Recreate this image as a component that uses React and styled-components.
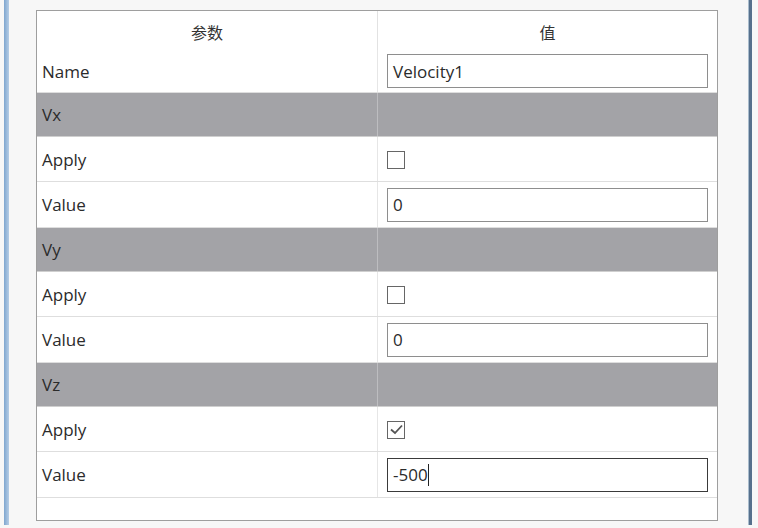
import React from "react";
import styled, { createGlobalStyle } from "styled-components";

const GlobalStyle = createGlobalStyle`
  html, body {
    margin: 0;
    padding: 0;
    background: #f7f7f7;
  }
`;

const rows = [
  { type: "text", label: "Name", value: "Velocity1", height: 43 },
  { type: "group", label: "Vx" },
  { type: "check", label: "Apply", checked: false },
  { type: "text", label: "Value", value: "0" },
  { type: "group", label: "Vy" },
  { type: "check", label: "Apply", checked: false },
  { type: "text", label: "Value", value: "0" },
  { type: "group", label: "Vz" },
  { type: "check", label: "Apply", checked: true },
  { type: "text", label: "Value", value: "-500", focused: true },
];

const rowHeights = { group: 44, check: 45, text: 46 };

const App = () => {
  return (
    <Page>
      <GlobalStyle />
      <LeftBar />
      <Panel>
        <HeaderRow>
          <HeaderCell>参数</HeaderCell>
          <HeaderCell>值</HeaderCell>
        </HeaderRow>
        {rows.map((row, i) => (
          <Row
            key={i}
            $group={row.type === "group"}
            $height={row.height || rowHeights[row.type]}
          >
            <LabelCell>{row.label}</LabelCell>
            <ValueCell $group={row.type === "group"}>
              {row.type === "text" && (
                <Field $focused={row.focused}>
                  {row.value}
                  {row.focused && <Caret />}
                </Field>
              )}
              {row.type === "check" && (
                <CheckBox>
                  {row.checked && (
                    <svg width="15" height="15" viewBox="0 0 15 15">
                      <path
                        d="M2 7.5 L6 11 L13 3.5"
                        fill="none"
                        stroke="#555"
                        strokeWidth="1.8"
                      />
                    </svg>
                  )}
                </CheckBox>
              )}
            </ValueCell>
          </Row>
        ))}
        <Filler />
      </Panel>
      <RightBar />
    </Page>
  );
};

const Page = styled.div`
  width: 758px;
  height: 528px;
  display: flex;
  align-items: stretch;
  background: #f7f7f7;
  font-family: "Open Sans", "Noto Sans CJK SC", sans-serif;
  color: #2b2b2b;
`;

const LeftBar = styled.div`
  width: 5px;
  margin: 0 0 3px 4px;
  background: linear-gradient(to right, #7fa6cf, #b5cde6);
`;

const RightBar = styled.div`
  width: 3px;
  margin: 0 0 3px 31px;
  background: #56708c;
  box-shadow: -1px 0 0 #a9bccd;
`;

const Panel = styled.div`
  width: 680px;
  margin: 10px 0 7px 27px;
  border: 1px solid #9e9e9e;
  background: #fff;
  display: flex;
  flex-direction: column;
`;

const HeaderRow = styled.div`
  display: grid;
  grid-template-columns: 1fr 1fr;
  height: 39px;
`;

const HeaderCell = styled.div`
  display: flex;
  align-items: center;
  justify-content: center;
  padding-top: 2px;
  font-family: "Noto Sans CJK SC", sans-serif;
  font-size: 16px;
  color: #333;
  & + & {
    border-left: 1px solid #e2e2e2;
  }
`;

const Row = styled.div`
  display: grid;
  grid-template-columns: 1fr 1fr;
  height: ${(p) => p.$height}px;
  box-sizing: border-box;
  border-bottom: 1px solid #dedede;
  background: ${(p) => (p.$group ? "#a3a3a7" : "#fff")};
  border-bottom-color: ${(p) => (p.$group ? "#cfcfcf" : "#dedede")};
`;

const LabelCell = styled.div`
  display: flex;
  align-items: center;
  padding-left: 5px;
  font-size: 17px;
`;

const ValueCell = styled.div`
  display: flex;
  align-items: center;
  padding: 0 9px;
  border-left: 1px solid ${(p) => (p.$group ? "#bdbdc0" : "#e6e6e6")};
`;

const Field = styled.div`
  flex: 1;
  height: 34px;
  box-sizing: border-box;
  border: ${(p) => (p.$focused ? "1.5px solid #3a3a3a" : "1px solid #8e8e8e")};
  display: flex;
  align-items: center;
  padding-left: 5px;
  font-size: 17px;
`;

const Caret = styled.span`
  display: inline-block;
  width: 1.5px;
  height: 22px;
  background: #222;
`;

const CheckBox = styled.div`
  width: 18px;
  height: 18px;
  box-sizing: border-box;
  border: 1.5px solid #666;
  display: flex;
  align-items: center;
  justify-content: center;
  margin-top: 1px;
`;

const Filler = styled.div`
  flex: 1;
`;

export default App;
